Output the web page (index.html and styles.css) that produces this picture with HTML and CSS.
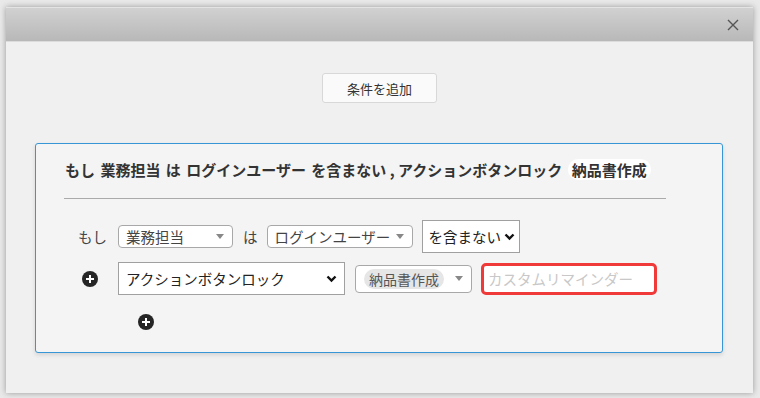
FILE: index.html
```html
<!DOCTYPE html>
<html lang="ja">
<head>
<meta charset="utf-8">
<link rel="stylesheet" href="styles.css">
</head>
<body>
<div class="modal">
  <div class="modal-header">
    <svg class="close" width="12" height="12" viewBox="0 0 12 12"><path d="M1 1L11 11M11 1L1 11" stroke="#555" stroke-width="1.4" fill="none"/></svg>
  </div>
  <div class="modal-body">
    <div class="btn-row"><button class="add-btn">条件を追加</button></div>
    <div class="panel">
      <div class="title">もし 業務担当 は ログインユーザー を含まない<span class="comma"> , </span>アクションボタンロック <span class="pill-white">納品書作成</span></div>
      <div class="divider"></div>
      <div class="row row1">
        <span class="lead">もし</span>
        <div class="s2 s2-a"><span class="s2-text">業務担当</span><span class="tri"></span></div>
        <span class="word">は</span>
        <div class="s2 s2-b"><span class="s2-text">ログインユーザー</span><span class="tri"></span></div>
        <div class="native ns-a"><span>を含まない</span><svg width="11" height="8" viewBox="0 0 11 8"><path d="M1.5 1.5L5.5 5.5L9.5 1.5" stroke="#111" stroke-width="2.4" fill="none"/></svg></div>
      </div>
      <div class="row row2">
        <span class="lead"><span class="plus"></span></span>
        <div class="native ns-b"><span>アクションボタンロック</span><svg width="11" height="8" viewBox="0 0 11 8"><path d="M1.5 1.5L5.5 5.5L9.5 1.5" stroke="#111" stroke-width="2.4" fill="none"/></svg></div>
        <div class="s2 s2-multi"><span class="tag">納品書作成</span><span class="tri"></span></div>
        <div class="reminder">カスタムリマインダー</div>
      </div>
      <div class="row row3">
        <span class="plus"></span>
      </div>
    </div>
  </div>
</div>
</body>
</html>
```
FILE: styles.css
```css
html, body {
  margin: 0;
  padding: 0;
}
body {
  width: 760px;
  height: 398px;
  background: #e9e9e9;
  font-family: "Noto Sans CJK JP", "Noto Sans", sans-serif;
  color: #333;
  overflow: hidden;
}
.modal {
  margin: 7px 0 0 6px;
  width: 747px;
  height: 386px;
  background: #f0f0f0;
  box-shadow: 0 0 6px rgba(0,0,0,0.35);
  display: flex;
  flex-direction: column;
}
.modal-header {
  height: 35px;
  box-sizing: border-box;
  border-top: 1px solid #e4e4e4;
  border-bottom: 1px solid #dcdcdc;
  background: linear-gradient(#d1d1d1, #b8b8b8);
  display: flex;
  align-items: center;
  justify-content: flex-end;
  padding-right: 14px;
}
.close { margin-top: 1px; }
.modal-body {
  flex: 1;
  padding-top: 31px;
}
.btn-row {
  display: flex;
  justify-content: center;
}
.add-btn {
  width: 115px;
  height: 30px;
  background: #fafafa;
  border: 1px solid #d8d8d8;
  border-radius: 3px;
  font-family: inherit;
  font-size: 13px;
  color: #333;
  padding: 0;
}
.panel {
  margin: 40px 30px 0 29px;
  height: 210px;
  box-sizing: border-box;
  border: 1px solid #3796d6;
  border-radius: 3px;
  background: #f4f4f4;
  box-shadow: 0 2px 4px rgba(0,0,0,0.12);
  padding-top: 16px;
}
.title {
  margin-left: 29px;
  font-size: 15px;
  font-weight: bold;
  line-height: 20px;
  color: #333;
  white-space: nowrap;
  word-spacing: 2px;
}
.comma { word-spacing: 0; }
.pill-white {
  background: #fff;
  border-radius: 10px;
  padding: 0 4px;
}
.divider {
  margin: 18px 0 0 28px;
  width: 602px;
  height: 1px;
  background: #aaa;
}
.row {
  display: flex;
  align-items: center;
  padding-left: 42px;
}
.row1 { margin-top: 21px; }
.row2 { margin-top: 9px; }
.row3 { margin-top: 19px; padding-left: 102px; }
.lead {
  width: 40px;
  font-size: 14.5px;
  color: #444;
  display: flex;
  align-items: center;
}
.row2 .lead { padding-left: 4px; width: 36px; }
.plus {
  width: 16px;
  height: 16px;
  border-radius: 50%;
  background: #252525;
  position: relative;
  display: inline-block;
}
.plus::before, .plus::after {
  content: "";
  position: absolute;
  background: #fff;
  left: 4px;
  top: 7px;
  width: 8px;
  height: 2px;
}
.plus::after {
  left: 7px;
  top: 4px;
  width: 2px;
  height: 8px;
}
.s2 {
  box-sizing: border-box;
  height: 23px;
  border: 1px solid #a8a8a8;
  border-radius: 4px;
  background: #fff;
  display: flex;
  align-items: center;
  font-size: 14.5px;
  color: #444;
  padding-left: 7px;
  padding-right: 8px;
}
.s2-text { flex: 1; white-space: nowrap; overflow: hidden; }
.tri {
  width: 0;
  height: 0;
  border-left: 4px solid transparent;
  border-right: 4px solid transparent;
  border-top: 5px solid #888;
  margin-left: 6px;
}
.s2-a { width: 115px; }
.s2-b { width: 146px; margin-left: 9px; }
.word {
  margin-left: 10px;
  font-size: 14.5px;
  color: #444;
}
.native {
  box-sizing: border-box;
  height: 33px;
  border: 1px solid #a0a0a0;
  background: #fff;
  display: flex;
  align-items: center;
  justify-content: space-between;
  font-size: 14.5px;
  color: #222;
  padding: 0 4px 0 6px;
  white-space: nowrap;
}
.ns-a { width: 98px; margin-left: 9px; }
.ns-b { width: 227px; }
.ns-b span { padding-left: 1px; }
.ns-b svg { margin-right: 3px; }
.s2-multi {
  width: 117px;
  height: 28px;
  margin-left: 10px;
  padding-left: 8px;
  justify-content: space-between;
}
.tag {
  background: #e6e6e6;
  border-radius: 10px;
  padding: 0 5px;
  line-height: 20px;
  color: #555;
  font-size: 14px;
}
.reminder {
  box-sizing: border-box;
  width: 176px;
  height: 32px;
  margin-left: 9px;
  border: 3px solid #f03a3a;
  border-radius: 5px;
  background: #fff;
  font-size: 14.5px;
  color: #c8c8c8;
  display: flex;
  align-items: center;
  padding-left: 4px;
  white-space: nowrap;
  overflow: hidden;
}
```
